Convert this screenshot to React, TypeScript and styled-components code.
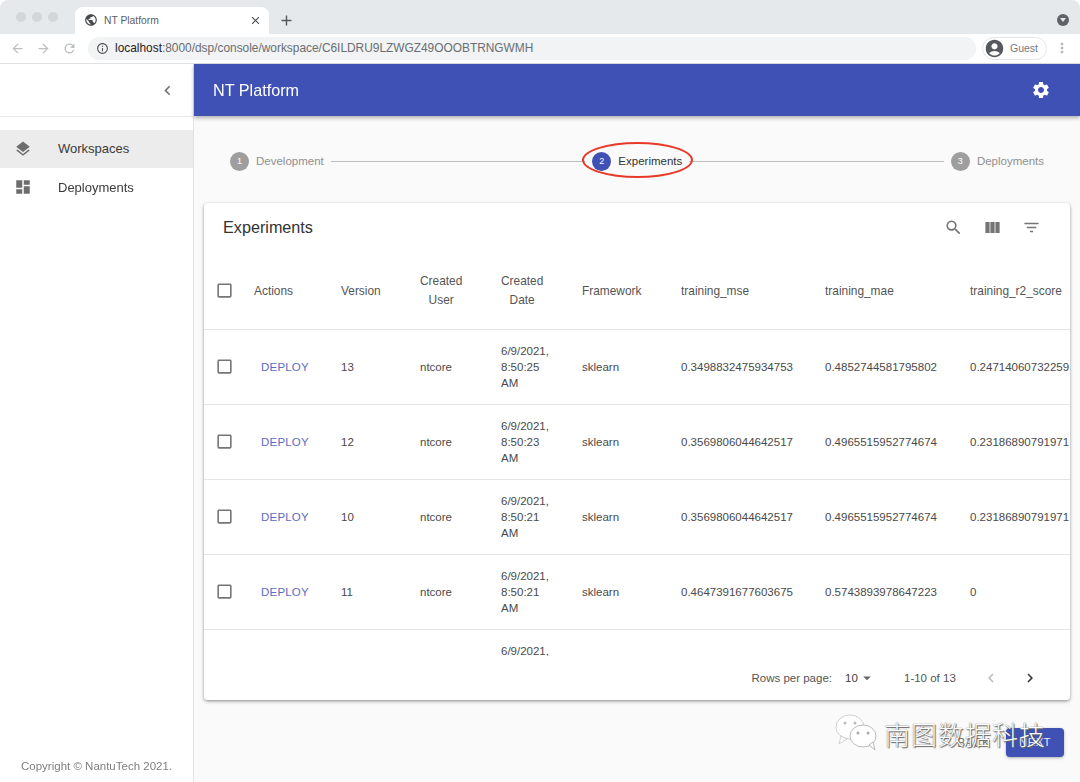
import React from "react";
import styled, { createGlobalStyle } from "styled-components";
import {
  MdAdd, MdArrowBack, MdArrowDropDown, MdArrowForward, MdCheckBoxOutlineBlank, MdChevronLeft, MdChevronRight,
  MdClose, MdDashboard, MdFilterList, MdInfoOutline, MdLayers, MdMoreVert, MdPublic, MdRefresh, MdSearch,
  MdSettings, MdViewColumn, MdAccountCircle,
} from "react-icons/md";

const Global = createGlobalStyle`
  html, body { margin: 0; padding: 0; width: 1080px; height: 782px; overflow: hidden; background: #fff; }
  body { font-family: "Liberation Sans", Arial, sans-serif; }
  * { box-sizing: border-box; }
`;

const Shell = styled.div`
  position: relative; width: 1080px; height: 782px; display: flex; flex-direction: column; overflow: hidden;
  filter: blur(0.4px);
`;
const TabStrip = styled.div`
  height: 34px; background: #e6e9ec; display: flex; align-items: flex-end; padding-left: 16px; color: #5f6368;
  border-radius: 8px 8px 0 0;
`;
const Lights = styled.div`display: flex; gap: 6px; align-self: flex-start; margin-top: 12px; width: 59px;`;
const Light = styled.span`width: 10px; height: 10px; border-radius: 50%; background: #d3d6d8;`;
const Tab = styled.div`
  width: 194px; height: 27px; background: #fff; border-radius: 8px 8px 0 0; display: flex; align-items: center;
  padding: 0 7px 1px 9px; gap: 6px; font-size: 10.3px; color: #5c6064;
`;
const TabTitle = styled.span`flex: 1;`;
const NewTab = styled.div`width: 34px; height: 27px; display: flex; align-items: center; justify-content: center; color: #55595d;`;
const ProfileDot = styled.div`
  margin-left: auto; margin-right: 11px; align-self: center; width: 12px; height: 12px; border-radius: 50%; background: #5f6368;
  display: flex; align-items: center; justify-content: center; margin-top: 6px;
  &::after { content: ""; border: 3px solid transparent; border-top: 4px solid #e6e9ec; border-bottom: 0; }
`;
const Toolbar = styled.div`
  height: 30px; background: #fff; border-bottom: 1px solid #dfe1e3; display: flex; align-items: center; padding: 0 10px 1px 10px; color: #bcbfc2;
`;
const NavIcons = styled.div`display: flex; gap: 11px; width: 78px;`;
const Address = styled.div`
  width: 888px; height: 23px; border-radius: 12px; background: #f1f3f4; display: flex; align-items: center;
  padding-left: 8px; gap: 6px; font-size: 11.9px; color: #6a6e72; white-space: nowrap;
`;
const Host = styled.span`color: #1f2225;`;
const GuestChip = styled.div`
  margin-left: 6px; width: 65px; height: 23px; border: 1px solid #e4e6e8; border-radius: 12px; display: flex; align-items: center;
  padding-left: 1px; gap: 5px; font-size: 10.5px; color: #75797d;
`;
const Dots = styled.div`margin-left: 7px; display: flex; color: #b0b3b6;`;

const Body = styled.div`flex: 1; display: flex; min-height: 0;`;
const Sidebar = styled.aside`
  width: 194px; border-right: 1px solid #e2e2e2; display: flex; flex-direction: column; background: #fff;
`;
const SideTop = styled.div`
  height: 53px; border-bottom: 1px solid #eaeaea; display: flex; align-items: center; justify-content: flex-end; padding: 0 16px 0 0; color: #6e6e6e;
`;
const SideList = styled.nav`padding-top: 12.5px; flex: 1;`;
const SideItem = styled.div<{ $active?: boolean }>`
  height: 38.5px; display: flex; align-items: center; padding-left: 14px; gap: 26px; font-size: 13px; color: #3a3a3a;
  background: ${(p) => (p.$active ? "#ececec" : "transparent")};
  svg { color: #6d6d6d; }
`;
const Copyright = styled.div`padding: 0 0 10px 21px; font-size: 11.5px; color: #7f7f7f;`;

const Main = styled.main`flex: 1; display: flex; flex-direction: column; background: #fafafa; min-width: 0; position: relative;`;
const AppBar = styled.header`
  height: 52px; background: #3f51b5; color: #fff; display: flex; align-items: center; justify-content: space-between;
  padding: 0 29px 0 19px; font-size: 16.2px; box-shadow: 0 2px 4px rgba(0,0,0,.3); position: relative; z-index: 1;
`;
const Stepper = styled.div`height: 87px; display: flex; align-items: center; padding: 3px 36px 0 36px; flex: none;`;
const Step = styled.div<{ $active?: boolean }>`
  display: flex; align-items: center; gap: 7px; font-size: 11.5px; color: ${(p) => (p.$active ? "#333" : "#8f8f8f")};
`;
const StepDot = styled.span<{ $active?: boolean }>`
  width: 19px; height: 19px; border-radius: 50%; background: ${(p) => (p.$active ? "#3f51b5" : "#9e9e9e")};
  color: #fff; font-size: 9px; display: flex; align-items: center; justify-content: center;
`;
const StepLine = styled.div`flex: 1; height: 1px; background: #bdbdbd; margin: 0 7px;`;
const Ring = styled.div`
  position: absolute; left: 388px; top: 78px; width: 111px; height: 36px; border: 2.5px solid #e8392a; border-radius: 50%; z-index: 2;
`;

const Card = styled.section`
  margin: 0 10px; height: 497px; flex: none; background: #fff; border-radius: 4px; overflow: hidden; display: flex; flex-direction: column; position: relative;
  box-shadow: 0 1px 3px rgba(0,0,0,.35), 0 2px 4px rgba(0,0,0,.12);
`;
const CardBar = styled.div`
  height: 52px; flex: none; display: flex; align-items: center; justify-content: space-between; padding: 0 29px 3px 19px; font-size: 16.2px; color: #333;
`;
const CardTools = styled.div`display: flex; gap: 20px; color: #757575;`;

const COLS = "40px 87px 79px 81px 81px 99px 144px 145px 200px";
const HeadRow = styled.div`
  display: grid; grid-template-columns: ${COLS}; height: 74.5px; align-items: center; font-size: 11.9px; color: #555; border-bottom: 1px solid #e4e4e4; flex: none; padding-bottom: 2px;
`;
const DataRow = styled.div`
  display: grid; grid-template-columns: ${COLS}; height: 75px; align-items: center; font-size: 11.5px; color: #4a4a4a; border-bottom: 1px solid #e4e4e4; flex: none;
`;
const Cell = styled.div`padding-left: 10px; white-space: nowrap;`;
const CheckCell = styled.div`display: flex; justify-content: center; padding-left: 0; color: #757575;`;
const HeadStack = styled.div`margin-left: 10px; width: fit-content; text-align: center; line-height: 19px;`;
const DateCell = styled.div`padding-left: 10px; line-height: 16px;`;
const DeployLink = styled.div`padding-left: 17px; color: #5b6cc4; font-size: 11.5px; letter-spacing: .2px;`;
const Pager = styled.div`
  position: absolute; left: 0; right: 0; bottom: 0; height: 44px; background: #fff; display: flex; align-items: center; justify-content: flex-end;
  padding-right: 31px; font-size: 11.5px; color: #555;
`;
const RowsSelect = styled.div`display: flex; align-items: center; margin-left: 13px; width: 59px; font-size: 11.5px; color: #444;`;
const PageInfo = styled.div`width: 78px; color: #555;`;
const PagerIcons = styled.div`display: flex; gap: 21px; align-items: center; color: #bbb; svg:last-child { color: #333; }`;

const Footer = styled.div`display: flex; justify-content: flex-end; padding: 28px 16px 0 0; gap: 16px; flex: none; align-items: center;`;
const BackLabel = styled.div`font-size: 12px; color: #777;`;
const NextButton = styled.button`
  width: 58px; height: 29px; border: 0; border-radius: 4px; background: #3f51b5; color: #e6e8f5; font: 11.5px "Liberation Sans", Arial, sans-serif; letter-spacing: .3px;
  padding: 0 0 2px; box-shadow: 0 1px 3px rgba(0,0,0,.3);
`;
const Watermark = styled.div`
  position: absolute; left: 834px; top: 712px; display: flex; align-items: center; gap: 6px; z-index: 5;
  color: #fff; font: 300 26px "Noto Sans CJK SC", sans-serif; letter-spacing: 1px;
  text-shadow: 0 0 1px #444, 1px 1px 1px #666;
`;
const WatermarkText = styled.span`margin-top: 3px;`;

const rows = [
  ["13", "8:50:25", "0.3498832475934753", "0.4852744581795802", "0.24714060732259"],
  ["12", "8:50:23", "0.3569806044642517", "0.4965515952774674", "0.23186890791971"],
  ["10", "8:50:21", "0.3569806044642517", "0.4965515952774674", "0.23186890791971"],
  ["11", "8:50:21", "0.4647391677603675", "0.5743893978647223", "0"],
];

const Row = ({ r }: { r: string[] }) => (
  <DataRow>
    <CheckCell><MdCheckBoxOutlineBlank size={19} /></CheckCell>
    <DeployLink>DEPLOY</DeployLink>
    <Cell>{r[0]}</Cell>
    <Cell>ntcore</Cell>
    <DateCell>6/9/2021,<br />{r[1]}<br />AM</DateCell>
    <Cell>sklearn</Cell>
    <Cell>{r[2]}</Cell>
    <Cell>{r[3]}</Cell>
    <Cell>{r[4]}</Cell>
  </DataRow>
);

export default function App() {
  return (
    <Shell>
      <Global />
      <TabStrip>
        <Lights><Light /><Light /><Light /></Lights>
        <Tab>
          <MdPublic size={14} color="#45484b" />
          <TabTitle>NT Platform</TabTitle>
          <MdClose size={13} color="#4a4d50" />
        </Tab>
        <NewTab><MdAdd size={17} /></NewTab>
        <ProfileDot />
      </TabStrip>
      <Toolbar>
        <NavIcons><MdArrowBack size={15} /><MdArrowForward size={15} /><MdRefresh size={15} /></NavIcons>
        <Address>
          <MdInfoOutline size={13} color="#555" />
          <span><Host>localhost</Host>:8000/dsp/console/workspace/C6ILDRU9LZWGZ49OOOBTRNGWMH</span>
        </Address>
        <GuestChip><MdAccountCircle size={21} color="#55585c" />Guest</GuestChip>
        <Dots><MdMoreVert size={16} /></Dots>
      </Toolbar>
      <Body>
        <Sidebar>
          <SideTop><MdChevronLeft size={19} /></SideTop>
          <SideList>
            <SideItem $active><MdLayers size={18} />Workspaces</SideItem>
            <SideItem><MdDashboard size={18} />Deployments</SideItem>
          </SideList>
          <Copyright>Copyright © NantuTech 2021.</Copyright>
        </Sidebar>
        <Main>
          <AppBar>NT Platform<MdSettings size={20} /></AppBar>
          <Stepper>
            <Step><StepDot>1</StepDot>Development</Step>
            <StepLine />
            <Step $active><StepDot $active>2</StepDot>Experiments</Step>
            <StepLine />
            <Step><StepDot>3</StepDot>Deployments</Step>
          </Stepper>
          <Ring />
          <Card>
            <CardBar>
              Experiments
              <CardTools><MdSearch size={19} /><MdViewColumn size={19} /><MdFilterList size={19} /></CardTools>
            </CardBar>
            <HeadRow>
              <CheckCell><MdCheckBoxOutlineBlank size={19} /></CheckCell>
              <Cell>Actions</Cell>
              <Cell>Version</Cell>
              <HeadStack>Created<br />User</HeadStack>
              <HeadStack>Created<br />Date</HeadStack>
              <Cell>Framework</Cell>
              <Cell>training_mse</Cell>
              <Cell>training_mae</Cell>
              <Cell>training_r2_score</Cell>
            </HeadRow>
            {rows.map((r) => <Row key={r[0]} r={r} />)}
            <DataRow>
              <div /><div /><div /><div />
              <DateCell>6/9/2021,<br />8:50:19<br />AM</DateCell>
            </DataRow>
            <Pager>
              Rows per page:
              <RowsSelect>10<MdArrowDropDown size={18} color="#666" /></RowsSelect>
              <PageInfo>1-10 of 13</PageInfo>
              <PagerIcons><MdChevronLeft size={18} /><MdChevronRight size={18} /></PagerIcons>
            </Pager>
          </Card>
          <Footer>
            <BackLabel>BACK</BackLabel>
            <NextButton>NEXT</NextButton>
          </Footer>
        </Main>
      </Body>
      <Watermark>
        <svg width="44" height="38" viewBox="0 0 44 38" aria-hidden="true">
          <ellipse cx="16" cy="14" rx="14" ry="12" fill="#fff" stroke="#c4c4c4" strokeWidth="0.8" />
          <path d="M7 23 L5 31 L13 26Z" fill="#fff" stroke="#c4c4c4" strokeWidth="0.8" />
          <ellipse cx="29" cy="23" rx="13" ry="11" fill="#fff" stroke="#aaa" strokeWidth="0.8" />
          <path d="M35 32 L41 37 L39 29Z" fill="#fff" stroke="#aaa" strokeWidth="0.8" />
          <circle cx="11" cy="10" r="1.5" fill="#bbb" /><circle cx="21" cy="10" r="1.5" fill="#bbb" />
          <circle cx="24" cy="20" r="1.5" fill="#aaa" /><circle cx="34" cy="20" r="1.5" fill="#aaa" />
        </svg>
        <WatermarkText>南图数据科技</WatermarkText>
      </Watermark>
    </Shell>
  );
}
